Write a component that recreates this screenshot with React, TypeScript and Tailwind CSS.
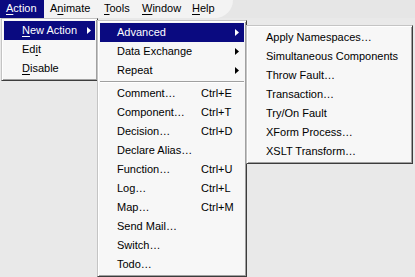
import React from "react";

const font = { fontFamily: '"Liberation Sans", Arial, sans-serif' };

function Arrow({ white }: { white?: boolean }) {
  return (
    <svg width="4" height="7" viewBox="0 0 4 7" className="block">
      <path d="M0 0 L4 3.5 L0 7 Z" fill={white ? "#ffffff" : "#000000"} />
    </svg>
  );
}

function Mn({ c }: { c: string }) {
  return <span className="underline underline-offset-[2px] decoration-1">{c}</span>;
}

type Item = { label: React.ReactNode; sc?: string; sub?: boolean; hi?: boolean };

function Row({
  item,
  pl,
  scX,
  arrowX,
}: {
  item: Item;
  pl: string;
  scX?: string;
  arrowX?: string;
}) {
  return (
    <div
      className={`relative h-[19px] leading-[19px] whitespace-nowrap ${pl} ${
        item.hi ? "bg-[#0a0a80] text-white" : "text-black"
      }`}
    >
      {item.label}
      {item.sc && <span className={`absolute top-0 ${scX}`}>{item.sc}</span>}
      {item.sub && (
        <span className={`absolute top-[6px] ${arrowX}`}>
          <Arrow white={item.hi} />
        </span>
      )}
    </div>
  );
}

const menuBox =
  "absolute bg-[#f7f7f7] border border-t-[#c4c4c4] border-l-[#c4c4c4] border-r-[#3c3c3c] border-b-[#3c3c3c] shadow-[inset_1px_1px_0_#ffffff,inset_-1px_-1px_0_#a0a0a0] p-[2px]";

export default function App() {
  const second: Item[] = [
    { label: "Advanced", sub: true, hi: true },
    { label: "Data Exchange", sub: true },
    { label: "Repeat", sub: true },
  ];
  const second2: Item[] = [
    { label: "Comment…", sc: "Ctrl+E" },
    { label: "Component…", sc: "Ctrl+T" },
    { label: "Decision…", sc: "Ctrl+D" },
    { label: "Declare Alias…" },
    { label: "Function…", sc: "Ctrl+U" },
    { label: "Log…", sc: "Ctrl+L" },
    { label: "Map…", sc: "Ctrl+M" },
    { label: "Send Mail…" },
    { label: "Switch…" },
    { label: "Todo…" },
  ];
  const third: Item[] = [
    { label: "Apply Namespaces…" },
    { label: "Simultaneous Components" },
    { label: "Throw Fault…" },
    { label: "Transaction…" },
    { label: "Try/On Fault" },
    { label: "XForm Process…" },
    { label: "XSLT Transform…" },
  ];

  return (
    <div
      className="relative w-[415px] h-[277px] overflow-hidden bg-[#e9e9e9] text-[11px]"
      style={font}
    >
      <div className="h-[18px] bg-[#e6e6e6]">
        <div className="flex h-[18px] w-[233px] bg-[#f3f3f3] rounded-br-[20px] leading-[17px]">
          <div className="w-[44px] pl-[6px] bg-[#0a0a80] text-white">
            <Mn c="A" />
            ction
          </div>
          <div className="w-[53px] pl-[6px]">
            A<Mn c="n" />
            imate
          </div>
          <div className="w-[38px] pl-[7px]">
            <Mn c="T" />
            ools
          </div>
          <div className="w-[50px] pl-[7px]">
            <Mn c="W" />
            indow
          </div>
          <div className="w-[40px] pl-[7px]">
            <Mn c="H" />
            elp
          </div>
        </div>
      </div>

      {/* Action menu */}
      <div className={`${menuBox} left-[1px] top-[18px] w-[97px]`}>
        <Row
          item={{
            label: (
              <>
                <Mn c="N" />
                ew Action
              </>
            ),
            sub: true,
            hi: true,
          }}
          pl="pl-[18px]"
          arrowX="left-[83px]"
        />
        <Row
          item={{
            label: (
              <>
                Ed<Mn c="i" />t
              </>
            ),
          }}
          pl="pl-[18px]"
        />
        <Row
          item={{
            label: (
              <>
                <Mn c="D" />
                isable
              </>
            ),
          }}
          pl="pl-[18px]"
        />
      </div>

      {/* Second menu */}
      <div className={`${menuBox} left-[97px] top-[20px] w-[150px]`}>
        {second.map((it, i) => (
          <Row key={i} item={it} pl="pl-[17px]" arrowX="left-[135px]" />
        ))}
        <div className="h-[4px] flex flex-col justify-center">
          <div className="h-px bg-[#a0a0a0]" />
          <div className="h-px bg-white" />
        </div>
        {second2.map((it, i) => (
          <Row key={i} item={it} pl="pl-[17px]" scX="left-[101px]" />
        ))}
      </div>

      {/* Third menu */}
      <div className={`${menuBox} left-[246px] top-[25px] w-[167px]`}>
        {third.map((it, i) => (
          <Row key={i} item={it} pl="pl-[17px]" />
        ))}
      </div>
    </div>
  );
}
